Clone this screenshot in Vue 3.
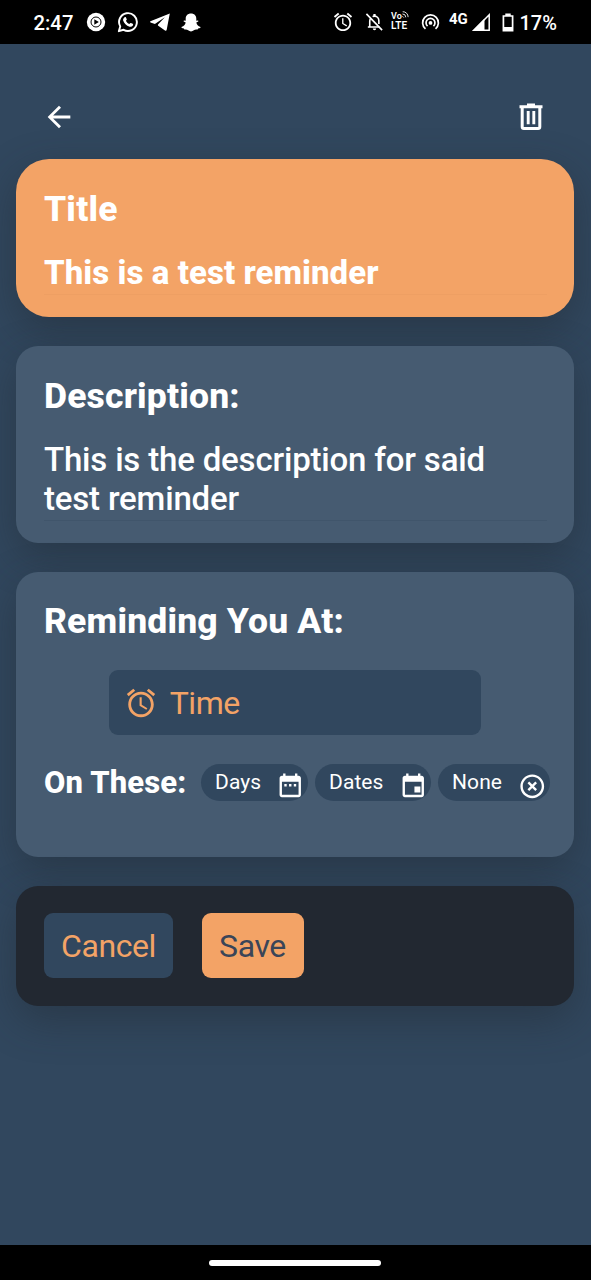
<script setup>
import { ref } from 'vue'

const title = ref('This is a test reminder')
const description = ref('This is the description for said test reminder')
</script>

<template>
  <div class="phone">
    <header class="status">
      <span class="clock">2:47</span>
      <svg class="s-play" viewBox="0 0 20 20">
        <circle cx="10" cy="10" r="9.2" fill="#fff" />
        <circle cx="10" cy="10" r="5" fill="none" stroke="#000" stroke-width="1" />
        <path d="M8.3 7.2v5.6l4.5-2.8z" fill="#000" />
      </svg>
      <svg class="s-chat" viewBox="0 0 24 24">
        <path d="M2 22l1.5-5.2A9.7 9.7 0 1 1 7.2 20.500z" fill="none" stroke="#fff" stroke-width="2.1" stroke-linejoin="round" />
        <path d="M8.300 6.800c.5-.5 1.200-.4 1.500.2l.8 1.900c.2.5-.1.900-.9 1.700.8 1.700 2 2.900 3.800 3.700.7-.9 1.100-1.400 1.700-1.200l1.900.9c.6.3.6.9.3 1.600-.6 1.300-2.200 2-3.700 1.500-3.500-1-6-3.400-7-6.600-.4-1.400.5-2.800 1.600-3.700z" fill="#fff" />
      </svg>
      <svg class="s-plane" viewBox="0 0 20 18">
        <path d="M19.800.4L.4 8.300c-.5.300-.4.900.1 1.100l4.400 1.700L14.800 4.300 8 11.600l-.1.900 7.100 4.900c.8.500 1.500.2 1.700-.7z" fill="#fff" />
      </svg>
      <svg class="s-ghost" viewBox="0 0 20 19">
        <path d="M10 .5c3.300 0 5.300 2.200 5.300 5.200v2l1.500-.3c.9.1.8 1 0 1.400l-1.500.8c.5 2.200 1.800 3.700 4.200 4.400.4.800-.8 1.300-2.400 1.500l-.5 1.100c-2-.3-2.700-.1-3.700.7-1.900 1.500-3.900 1.500-5.800 0-1-.8-1.700-1-3.700-.7l-.5-1.100C1.300 15.300.1 14.800.5 14c2.400-.7 3.700-2.200 4.200-4.400l-1.500-.8c-.8-.4-.9-1.300 0-1.400l1.500.3v-2C4.700 2.700 6.700.5 10 .5z" fill="#fff" />
      </svg>

      <svg class="s-alarm" viewBox="1 1 22 22">
        <path d="M22 5.720l-4.600-3.860-1.290 1.530 4.600 3.860L22 5.720zM7.880 3.390L6.600 1.860 2 5.710l1.290 1.530 4.590-3.850zM12.500 8H11v6l4.750 2.850.75-1.230-4-2.370V8zM12 4c-4.970 0-9 4.030-9 9s4.020 9 9 9c4.970 0 9-4.030 9-9s-4.030-9-9-9zm0 16c-3.870 0-7-3.130-7-7s3.130-7 7-7 7 3.130 7 7-3.130 7-7 7z" fill="#fff" />
      </svg>
      <svg class="s-bell" viewBox="0 0 20 20">
        <g fill="none" stroke="#fff" stroke-width="1.700">
          <path d="M1.500 1.500L18 18.500" />
          <path d="M3 15.300h12.200M5 15V9.300C5 8 5.300 7 5.900 6.200M8 4.300c.5-.3 1.200-.5 2-.5 2.700 0 4.600 2.200 4.600 5v3.200" />
        </g>
        <path d="M8.800 1.500h2.400v2.500H8.800zM8.200 16.800h3.600a1.800 1.800 0 0 1-3.600 0z" fill="#fff" />
      </svg>
      <div class="volte">
        <div class="vo">
          <span>Vo</span>
          <svg viewBox="0 0 8 8"><path d="M.5 3.400a3.800 3.800 0 0 1 3.800 3.800M.8.800a6 6 0 0 1 6.200 6.200M.5 6l1.500 1.500" fill="none" stroke="#fff" stroke-width="1" /></svg>
        </div>
        <span>LTE</span>
      </div>
      <svg class="s-hotspot" viewBox="0 0 20 20">
        <g fill="none" stroke="#fff" stroke-width="1.800">
          <path d="M4.700 17.200a8.300 8.300 0 1 1 10.600 0" />
          <path d="M6.900 14.400a4.700 4.700 0 1 1 6.200 0" />
        </g>
        <circle cx="10" cy="11" r="2" fill="#fff" />
      </svg>
      <span class="net">4G</span>
      <svg class="s-signal" viewBox="0 0 18 18">
        <path d="M17.200 1.800v15.400H2z" fill="none" stroke="#fff" stroke-width="1.500" />
        <path d="M0 18h12.500V5.500z" fill="#fff" />
      </svg>
      <svg class="s-battery" viewBox="0 0 12 19">
        <path d="M1.400 3h9.200v14.600H1.400z" fill="none" stroke="#fff" stroke-width="1.700" />
        <path d="M3.300.5h5.400V3H3.300zM1 14h10v4H1z" fill="#fff" />
      </svg>
      <span class="pct">17%</span>
    </header>

    <main class="screen">
      <nav class="toolbar">
        <svg class="back" viewBox="0 0 24 24"><path d="M20 11H7.830l5.590-5.590L12 4l-8 8 8 8 1.410-1.410L7.830 13H20v-2z" fill="#fff" /></svg>
        <svg class="trash" viewBox="0 0 24 28">
          <path d="M8 .5h8v1.700h7.500v3H.5v-3H8z" fill="#fff" />
          <path d="M3.200 4.500v19.300q0 1.700 1.700 1.700h14.200q1.700 0 1.700-1.700V4.500" fill="none" stroke="#fff" stroke-width="3" />
          <path d="M9.200 8v13.300M14.800 8v13.300" stroke="#fff" stroke-width="2.900" />
        </svg>
      </nav>

      <section class="card title-card">
        <h2>Title</h2>
        <p class="value strong">{{ title }}</p>
      </section>

      <section class="card desc-card">
        <h2>Description:</h2>
        <p class="value">{{ description }}</p>
      </section>

      <section class="card time-card">
        <h2>Reminding You At:</h2>
        <div class="time-field">
          <svg viewBox="0 0 24 24"><path d="M22 5.720l-4.600-3.860-1.290 1.530 4.600 3.860L22 5.720zM7.880 3.390L6.600 1.860 2 5.710l1.290 1.530 4.590-3.850zM12.500 8H11v6l4.750 2.850.75-1.230-4-2.370V8zM12 4c-4.970 0-9 4.030-9 9s4.020 9 9 9c4.970 0 9-4.030 9-9s-4.030-9-9-9zm0 16c-3.870 0-7-3.130-7-7s3.130-7 7-7 7 3.130 7 7-3.130 7-7 7z" fill="#f3a366" /></svg>
          <span>Time</span>
        </div>
        <div class="repeat">
          <h3>On These:</h3>
          <button class="chip days">
            <span>Days</span>
            <svg viewBox="0 0 24 24"><path d="M9 11H7v2h2v-2zm4 0h-2v2h2v-2zm4 0h-2v2h2v-2zm2-7h-1V2h-2v2H8V2H6v2H5c-1.110 0-1.990.9-1.990 2L3 20c0 1.100.890 2 2 2h14c1.100 0 2-.9 2-2V6c0-1.100-.9-2-2-2zm0 16H5V9h14v11z" fill="#fff" /></svg>
          </button>
          <button class="chip dates">
            <span>Dates</span>
            <svg viewBox="0 0 24 24"><path d="M18 13h-5v5h5v-5zM16 2v2H8V2H6v2H5c-1.110 0-1.990.9-1.990 2L3 20c0 1.100.890 2 2 2h14c1.100 0 2-.9 2-2V6c0-1.100-.9-2-2-2h-1V2h-2zm3 18H5V9h14v11z" fill="#fff" /></svg>
          </button>
          <button class="chip none">
            <span>None</span>
            <svg viewBox="0 0 24 24"><path d="M14.590 8L12 10.590 9.410 8 8 9.410 10.590 12 8 14.590 9.410 16 12 13.410 14.590 16 16 14.590 13.410 12 16 9.410 14.590 8zM12 2C6.470 2 2 6.470 2 12s4.470 10 10 10 10-4.470 10-10S17.530 2 12 2zm0 18c-4.410 0-8-3.590-8-8s3.590-8 8-8 8 3.590 8 8-3.590 8-8 8z" fill="#fff" /></svg>
          </button>
        </div>
      </section>

      <section class="card actions">
        <button class="btn cancel">Cancel</button>
        <button class="btn save">Save</button>
      </section>
    </main>

    <footer class="navbar"><div class="handle"></div></footer>
  </div>
</template>

<style>
html,
body {
  margin: 0;
  background: #31475e;
}
</style>

<style scoped>
* {
  box-sizing: border-box;
}
.phone {
  width: 591px;
  height: 1280px;
  display: flex;
  flex-direction: column;
  overflow: hidden;
  background: #31475e;
  color: #fff;
  font-family: Roboto, 'Liberation Sans', sans-serif;
}
svg {
  display: block;
  flex: none;
}
.status {
  height: 44px;
  flex: none;
  background: #000;
  display: flex;
  align-items: center;
  padding-left: 33.500px;
  white-space: nowrap;
}
.clock {
  width: 52.500px;
  flex: none;
  font-size: 20.300px;
  font-weight: 500;
  padding-top: 1px;
}
.s-play { width: 20px; height: 20px; margin-right: 11px; }
.s-chat { width: 22px; height: 22px; margin-right: 11px; }
.s-plane { width: 20px; height: 18px; margin-right: 11px; }
.s-ghost { width: 20px; height: 19px; margin-right: 132px; }
.s-alarm { width: 20px; height: 20px; margin-right: 12px; }
.s-bell { width: 19px; height: 20px; margin-right: 7px; }
.volte {
  width: 18px;
  margin-right: 12px;
  margin-top: -3px;
  font-size: 10px;
  line-height: 10px;
  font-weight: 600;
  flex: none;
}
.vo { display: flex; font-size: 9px; line-height: 10px; }
.vo svg { width: 7px; height: 7px; }
.s-hotspot { width: 19px; height: 20px; margin-right: 9px; }
.net {
  width: 22.500px;
  flex: none;
  font-size: 15px;
  line-height: 16px;
  font-weight: 700;
  margin-top: -7px;
}
.s-signal { width: 18px; height: 18px; margin-right: 12.500px; }
.s-battery { width: 12px; height: 19px; margin-right: 5.500px; }
.pct { font-size: 20px; font-weight: 500; padding-top: 1px; }

.screen {
  flex: 1;
  display: flex;
  flex-direction: column;
  padding: 0 17px 0 16px;
}
.toolbar {
  height: 115px;
  flex: none;
  display: flex;
  justify-content: space-between;
  align-items: flex-start;
  padding: 56px 31px 0 26px;
}
.back { width: 34px; height: 34px; }
.trash { width: 24px; height: 28px; margin-top: 3px; }

.card {
  flex: none;
  border-radius: 22px;
  background: #465b71;
  padding: 29px 27.500px 0 28px;
  margin-bottom: 29px;
  box-shadow: 0 14px 40px rgba(34, 42, 50, 0.48);
  position: relative;
}
h2,
h3,
p {
  margin: 0;
}
h2 {
  font-size: 35.500px;
  line-height: 42px;
  font-weight: 800;
  letter-spacing: 0.17px;
}
h3 {
  flex: none;
  font-size: 31px;
  line-height: 37px;
  font-weight: 800;
  letter-spacing: 0.15px;
  width: 157px;
  white-space: nowrap;
}
.title-card {
  height: 158px;
  border-radius: 33px;
  background: #f3a366;
}
.value {
  margin-top: 23px;
  font-size: 33px;
  line-height: 39px;
  font-weight: 500;
  letter-spacing: -0.18px;
  padding-bottom: 2px;
  border-bottom: 1px solid #40556b;
}
.strong {
  font-weight: 800;
  letter-spacing: 0.05px;
  border-bottom-color: #ee9f63;
}
.desc-card { height: 197px; }
.time-card { height: 285px; padding-top: 28px; }
.time-field {
  width: 372px;
  height: 65px;
  margin: 28px auto 0;
  border-radius: 9px;
  background: #31475e;
  color: #f3a366;
  display: flex;
  align-items: center;
  padding-left: 14.500px;
  font-size: 32px;
  letter-spacing: -0.5px;
}
.time-field svg { width: 34px; height: 34px; margin-right: 12px; }
.repeat {
  display: flex;
  align-items: center;
  margin-top: 28.500px;
}
button {
  border: 0;
  margin: 0;
  font-family: inherit;
  color: inherit;
}
.chip {
  flex: none;
  height: 37.500px;
  border-radius: 19px;
  background: #31475e;
  display: flex;
  align-items: center;
  justify-content: space-between;
  font-size: 21px;
  letter-spacing: 0.1px;
  padding: 0 3.500px 0 14px;
  margin-right: 7px;
}
.chip svg { width: 28.500px; height: 28.500px; margin-top: 5px; }
.days { width: 107px; }
.dates { width: 116px; }
.none { width: 111.500px; margin-right: 0; }
.none svg { margin-top: 7px; }

.actions {
  height: 120px;
  background: #222831;
  display: flex;
  padding-top: 27px;
}
.btn {
  height: 65px;
  border-radius: 9px;
  font-size: 32px;
  letter-spacing: -0.4px;
  padding: 0;
}
.cancel { width: 129px; background: #31475e; color: #f3a366; margin-right: 28.500px; }
.save { width: 102px; background: #f3a366; color: #3a4558; }

.navbar {
  height: 35px;
  flex: none;
  background: #000;
  display: flex;
  align-items: center;
  justify-content: center;
  padding-right: 1px;
}
.handle {
  width: 172px;
  height: 6px;
  border-radius: 3px;
  background: #fff;
}
</style>
